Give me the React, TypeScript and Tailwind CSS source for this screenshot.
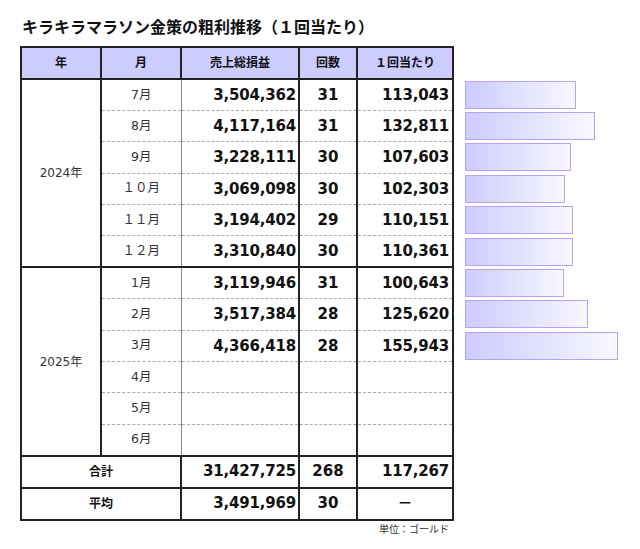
import React from "react";

const rows: { y?: string; span?: number; m: string; s?: string; c?: string; p?: string; v?: number; last?: boolean }[] = [
  { y: "2024年", span: 6, m: "7月", s: "3,504,362", c: "31", p: "113,043", v: 113043 },
  { m: "8月", s: "4,117,164", c: "31", p: "132,811", v: 132811 },
  { m: "9月", s: "3,228,111", c: "30", p: "107,603", v: 107603 },
  { m: "１０月", s: "3,069,098", c: "30", p: "102,303", v: 102303 },
  { m: "１１月", s: "3,194,402", c: "29", p: "110,151", v: 110151 },
  { m: "１２月", s: "3,310,840", c: "30", p: "110,361", v: 110361, last: true },
  { y: "2025年", span: 6, m: "1月", s: "3,119,946", c: "31", p: "100,643", v: 100643 },
  { m: "2月", s: "3,517,384", c: "28", p: "125,620", v: 125620 },
  { m: "3月", s: "4,366,418", c: "28", p: "155,943", v: 155943 },
  { m: "4月" },
  { m: "5月" },
  { m: "6月", last: true },
];

export default function App() {
  const font = { fontFamily: '"DejaVu Sans", Verdana, "Noto Sans CJK JP", sans-serif' };
  return (
    <div className="w-[640px] h-[549px] bg-white text-[#111]" style={font}>
      <div className="pl-[22px] pt-[17px] h-[46px] text-[16px] font-bold leading-[22px]">キラキラマラソン金策の粗利推移（１回当たり）</div>
      <div className="flex">
        <div className="ml-[20px] w-[432px]">
          <table className="w-[432px] border-collapse border-2 border-[#222] table-fixed">
            <colgroup>
              <col className="w-[80px]" /><col className="w-[80px]" /><col className="w-[118px]" /><col className="w-[58px]" /><col className="w-[96px]" />
            </colgroup>
            <thead>
              <tr className="h-[32px] bg-[#ccccff] text-[12px] font-bold">
                {["年", "月", "売上総損益", "回数", "１回当たり"].map((h) => (
                  <th key={h} className="border-2 border-[#222] font-bold">{h}</th>
                ))}
              </tr>
            </thead>
            <tbody>
              {rows.map((r, i) => {
                const bb = r.last
                  ? "border-b-2 border-b-[#222]"
                  : "border-b border-b-[#aaa] [border-bottom-style:dashed]";
                return (
                  <tr key={i} className="h-[31.4px]">
                    {r.y && (
                      <td rowSpan={r.span} className="border-2 border-[#222] text-center text-[12px] text-[#333]">{r.y}</td>
                    )}
                    <td className={`border-r border-r-[#888] text-center text-[12.5px] text-[#333] ${bb}`}>{r.m}</td>
                    <td className={`border-r-2 border-r-[#222] text-right pr-[2px] text-[15px] font-bold tracking-[-0.2px] ${bb}`}>{r.s}</td>
                    <td className={`border-r-2 border-r-[#222] text-center text-[15px] font-bold ${bb}`}>{r.c}</td>
                    <td className={`text-right pr-[3px] text-[15px] font-bold tracking-[-0.2px] ${bb}`}>{r.p}</td>
                  </tr>
                );
              })}
              <tr className="h-[32px] border-b-2 border-[#222]">
                <td colSpan={2} className="border-r-2 border-[#222] text-center text-[12px] font-bold">合計</td>
                <td className="border-r-2 border-[#222] text-right pr-[2px] text-[15px] font-bold tracking-[-0.2px]">31,427,725</td>
                <td className="border-r-2 border-[#222] text-center text-[15px] font-bold">268</td>
                <td className="text-right pr-[3px] text-[15px] font-bold tracking-[-0.2px]">117,267</td>
              </tr>
              <tr className="h-[32px]">
                <td colSpan={2} className="border-r-2 border-[#222] text-center text-[12px] font-bold">平均</td>
                <td className="border-r-2 border-[#222] text-right pr-[2px] text-[15px] font-bold tracking-[-0.2px]">3,491,969</td>
                <td className="border-r-2 border-[#222] text-center text-[15px] font-bold">30</td>
                <td className="text-center text-[15px] font-bold">－</td>
              </tr>
            </tbody>
          </table>
          <div className="text-right pr-[3px] pt-[1px] text-[10px] text-[#333]">単位：ゴールド</div>
        </div>
        <div className="ml-[13px] pt-[33px] flex flex-col">
          {rows.map((r, i) => (
            <div key={i} className="h-[31.4px] flex items-center">
              {r.v && (
                <div
                  className="h-[28px] border border-[#b8a0ff] bg-gradient-to-r from-[#ccccff] to-[#f8f8ff]"
                  style={{ width: Math.round(r.v / 1019) }}
                />
              )}
            </div>
          ))}
        </div>
      </div>
    </div>
  );
}
